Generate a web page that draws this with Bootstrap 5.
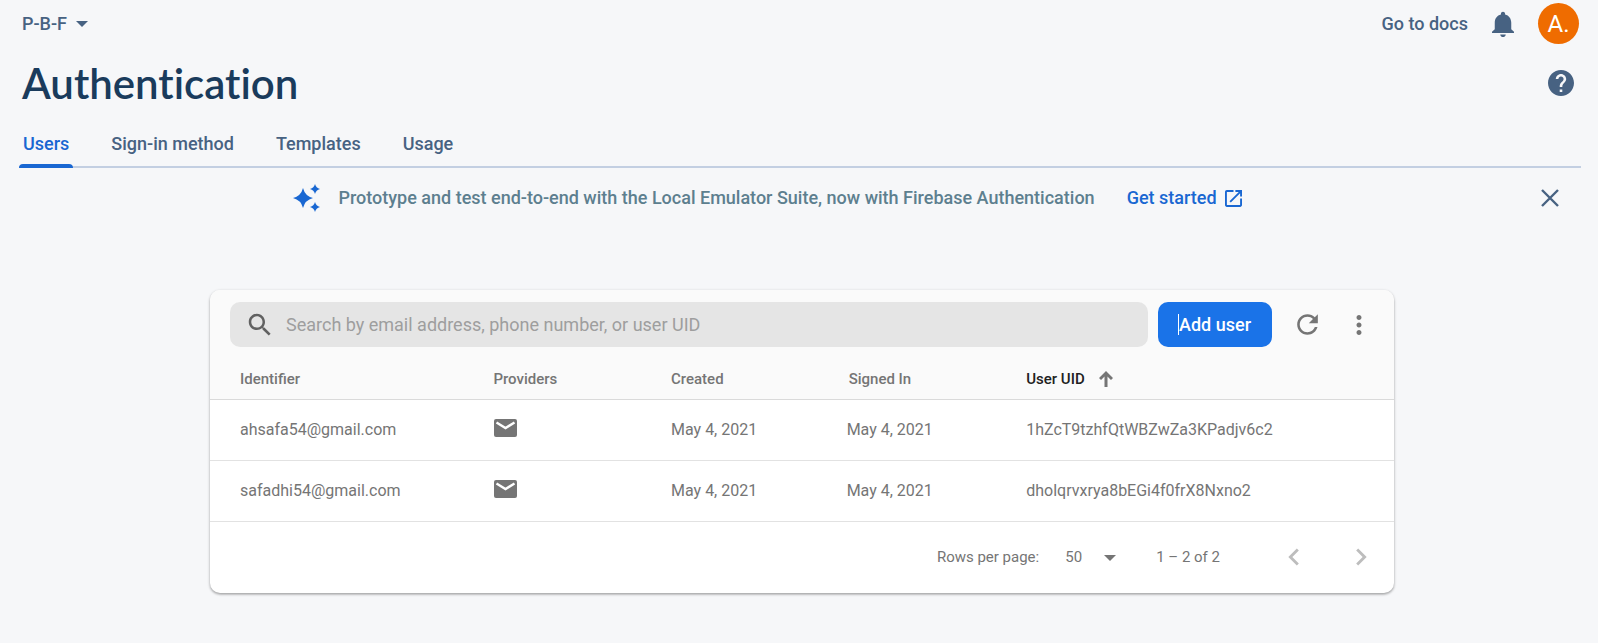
<!DOCTYPE html>
<html lang="en">
<head>
<meta charset="utf-8">
<meta name="viewport" content="width=device-width, initial-scale=1">
<title>Authentication</title>
<link href="https://cdn.jsdelivr.net/npm/bootstrap@5.3.0/dist/css/bootstrap.min.css" rel="stylesheet">
<style>
  body { background: #f6f7f9; color: #757575; font-family: Roboto, "Liberation Sans", sans-serif; font-size: 18px; line-height: 24px; }
  svg { display: block; fill: currentColor; flex: none; }
  .plain-btn { border: 0; background: none; padding: 0; color: inherit; display: inline-flex; align-items: center; justify-content: center; font-weight: 500; }
  .slate { color: #476282; }
  .docs-link { font-weight: 500; }
  .top-bar { height: 47px; padding: 0 19px 0 22px; }
  .avatar { width: 41px; height: 41px; background: #ef6c00; color: #fff; font-size: 24px; font-weight: 400; }
  .title-row { height: 75px; padding: 0 24px 4px 22px; }
  .page-title { font-family: Lato, sans-serif; font-weight: 600; font-size: 42px; line-height: 48px; font-variant-ligatures: none; color: #1a3b5c; }
  .tab-strip { margin: 0 17px 0 19px; border-bottom: 2px solid #c3cfe2; height: 46px; }
  .tab-strip .nav-link { padding: 10px 4px 0; margin: 0 34px 0 0; height: 46px; color: #476282; font-weight: 500; border-bottom: 0; }
  .tab-strip .nav-link.active { color: #1967d2; }
  .tab-strip .nav-link.active::after { content: ""; display: block; height: 4px; margin: 8px -4px 0; border-radius: 4px 4px 0 0; background: #1967d2; }
  .notice { height: 60px; padding: 0 36px 0 24px; color: #5d7f8f; font-weight: 500; }
  .notice-text { padding-right: 28px; }
  .notice-link { color: #1967d2; margin-left: 32px; }
  .users-wrap { padding: 62px 18px 48px 24px; }
  .users-card { max-width: 1184px; border: 0; border-radius: 10px; background: #fff; box-shadow: 0 1px 3px rgba(0,0,0,.3), 0 2px 2px rgba(0,0,0,.1); color: inherit; }
  .card-tools { padding: 12px 20px; background: #fafafa; border-radius: 10px 10px 0 0; }
  .search-box { height: 45px; border-radius: 10px; background: #e5e5e5; padding: 0 15px; gap: 11px; }
  .search-box input { border: 0; outline: 0; background: none; padding: 0; width: 100%; color: #616161; }
  .search-box input::placeholder { color: #9e9e9e; opacity: 1; }
  .add-user { height: 45px; border-radius: 10px; border: 0; background: #1a73e8; color: #fff; font-weight: 500; padding: 0 21px; margin-left: 10px; white-space: nowrap; }
  .text-caret { width: 1px; height: 21px; background: #fff; left: 20px; top: 12px; }
  .refresh { margin-left: 20px; }
  .more { margin-left: 21px; }
  .users-table { table-layout: fixed; --bs-table-bg: transparent; --bs-table-color: #757575; }
  .users-table th, .users-table td { padding: 0 0 0 20px; border-bottom: 1px solid #e2e2e2; vertical-align: middle; }
  .users-table th { height: 40px; background: #fafafa; font-size: 15px; line-height: 20px; font-weight: 500; color: #757575; border-color: #dadada; }
  .users-table td { height: 61px; font-size: 16px; color: #757575; }
  .users-table th:first-child, .users-table td:first-child { padding-left: 30px; }
  .users-table td:nth-child(4) { padding-left: 18px; }
  .users-table th.sorted { color: #212121; }
  .sort-arrow { margin-left: 14px; }
  .mail { margin: 0 0 4px 1px; }
  .col-id { width: 22.25%; } .col-std { width: 15%; }
  .pager { height: 71px; padding: 0 16px; font-size: 15px; }
  .page-size { margin-left: 26px; }
  .page-size select { appearance: none; border: 0; background: none; color: inherit; padding: 0; width: 51px; }
  .page-size svg { right: 0; top: 10px; pointer-events: none; }
  .range { margin-left: 40px; }
  .pager .plain-btn { color: #bdbdbd; }
  .prev { margin-left: 57px; }
  .next { margin-left: 33px; }
</style>
</head>
<body>
<header class="top-bar d-flex align-items-center justify-content-between slate">
  <button class="plain-btn" type="button">P-B-F
    <svg class="ms-2" width="15" height="6" viewBox="0 0 15 6"><path d="M1 0h12L7 6z"/></svg>
  </button>
  <div class="d-flex align-items-center">
    <a href="#" class="slate text-decoration-none docs-link">Go to docs</a>
    <button class="plain-btn ms-4" type="button" aria-label="Notifications">
      <svg width="22" height="26" viewBox="4 2 16 20" preserveAspectRatio="none"><path d="M12 22c1.100 0 2-.9 2-2h-4c0 1.100.9 2 2 2zm6-6v-5c0-3.070-1.630-5.640-4.500-6.320V4c0-.83-.67-1.500-1.500-1.500s-1.500.67-1.500 1.500v.68C7.640 5.360 6 7.920 6 11v5l-2 2v1h16v-1l-2-2z"/></svg>
    </button>
    <button class="plain-btn avatar rounded-circle ms-4" type="button">A.</button>
  </div>
</header>
<main>
  <div class="title-row d-flex align-items-center justify-content-between">
    <h1 class="page-title mb-0">Authentication</h1>
    <button class="plain-btn slate" type="button" aria-label="Help">
      <svg width="26" height="26" viewBox="2 2 20 20"><path d="M12 2C6.480 2 2 6.480 2 12s4.480 10 10 10 10-4.480 10-10S17.520 2 12 2zm1 17h-2v-2h2v2zm2.070-7.750l-.9.920C13.450 12.900 13 13.500 13 15h-2v-.5c0-1.100.45-2.100 1.170-2.830l1.240-1.260c.37-.36.59-.86.59-1.410 0-1.100-.9-2-2-2s-2 .9-2 2H8c0-2.210 1.790-4 4-4s4 1.790 4 4c0 .88-.36 1.680-.93 2.250z"/></svg>
    </button>
  </div>
  <nav class="nav tab-strip" aria-label="Authentication sections">
    <a class="nav-link active" href="#" aria-current="page">Users</a>
    <a class="nav-link" href="#">Sign-in method</a>
    <a class="nav-link" href="#">Templates</a>
    <a class="nav-link" href="#">Usage</a>
  </nav>
  <section class="notice d-flex align-items-center">
    <div class="notice-text flex-grow-1 d-flex align-items-center justify-content-center">
      <svg width="30" height="30" viewBox="0 0 30 30" class="me-3"><path fill="#1967d2" d="M11 5q2 8 10 10q-8 2-10 10q-2-8-10-10q8-2 10-10zM23 1q1 4 5 5q-4 1-5 5q-1-4-5-5q4-1 5-5zM23 19q1 4 5 5q-4 1-5 5q-1-4-5-5q4-1 5-5z"/></svg>
      <span>Prototype and test end-to-end with the Local Emulator Suite, now with Firebase Authentication</span>
      <a href="#" class="notice-link d-flex align-items-center text-decoration-none text-nowrap">Get started
        <svg class="ms-2" width="17" height="17" viewBox="3 3 18 18"><path d="M19 19H5V5h7V3H5c-1.110 0-2 .9-2 2v14c0 1.100.89 2 2 2h14c1.100 0 2-.9 2-2v-7h-2v7zM14 3v2h3.590l-9.830 9.830 1.410 1.410L19 6.410V10h2V3h-7z"/></svg>
      </a>
    </div>
    <button class="plain-btn slate" type="button" aria-label="Dismiss">
      <svg width="24" height="24" viewBox="0 0 24 24"><path d="M4 4l16 16M20 4L4 20" fill="none" stroke="currentColor" stroke-width="2.400"/></svg>
    </button>
  </section>
  <section class="users-wrap">
    <div class="card users-card mx-auto">
      <div class="card-tools d-flex align-items-center">
        <label class="search-box flex-grow-1 d-flex align-items-center">
          <svg width="30" height="30" viewBox="0 0 24 24"><path fill="#616161" d="M15.500 14h-.79l-.28-.27C15.410 12.590 16 11.110 16 9.500 16 5.910 13.090 3 9.500 3S3 5.910 3 9.500 5.910 16 9.500 16c1.610 0 3.090-.59 4.230-1.570l.27.28v.79l5 4.990L20.490 19l-4.990-5zm-6 0C7.010 14 5 11.990 5 9.500S7.010 5 9.500 5 14 7.010 14 9.500 11.990 14 9.500 14z"/></svg>
          <input type="search" aria-label="Search users" placeholder="Search by email address, phone number, or user UID">
        </label>
        <button class="add-user position-relative" type="button">Add user<span class="text-caret position-absolute"></span></button>
        <button class="plain-btn refresh" type="button" aria-label="Refresh">
          <svg width="31" height="31" viewBox="0 0 24 24"><path d="M17.650 6.350C16.200 4.900 14.210 4 12 4c-4.420 0-7.990 3.580-7.990 8s3.570 8 7.990 8c3.730 0 6.840-2.550 7.730-6h-2.080c-.82 2.330-3.040 4-5.650 4-3.310 0-6-2.690-6-6s2.690-6 6-6c1.660 0 3.140.69 4.220 1.780L13 11h7V4l-2.350 2.350z"/></svg>
        </button>
        <button class="plain-btn more" type="button" aria-label="More options">
          <svg width="30" height="30" viewBox="0 0 24 24"><path d="M12 8c1.100 0 2-.9 2-2s-.9-2-2-2-2 .9-2 2 .9 2 2 2zm0 2c-1.100 0-2 .9-2 2s.9 2 2 2 2-.9 2-2-.9-2-2-2zm0 6c-1.100 0-2 .9-2 2s.9 2 2 2 2-.9 2-2-.9-2-2-2z"/></svg>
        </button>
      </div>
      <table class="table users-table mb-0">
        <colgroup><col class="col-id"><col class="col-std"><col class="col-std"><col class="col-std"><col></colgroup>
        <thead>
          <tr><th scope="col">Identifier</th><th scope="col">Providers</th><th scope="col">Created</th><th scope="col">Signed In</th>
            <th scope="col" class="sorted" aria-sort="ascending"><div class="d-flex align-items-center">User UID
              <svg class="sort-arrow" width="14" height="16" viewBox="0 0 14 16"><path fill="#757575" d="M7 0l7 7-2 2-3.500-3.500V16h-3V5.500L2 9 0 7z"/></svg></div></th></tr>
        </thead>
        <tbody>
          <tr><td>ahsafa54@gmail.com</td>
            <td><svg class="mail" width="23" height="18" viewBox="0 0 23 18" role="img" aria-label="Email"><path d="M2 0h19q2 0 2 2v14q0 2-2 2H2q-2 0-2-2V2q0-2 2-2z"/><path d="M2.500 3.500l9 5.500 9-5.500" fill="none" stroke="#fff" stroke-width="2.400"/></svg></td>
            <td>May 4, 2021</td><td>May 4, 2021</td><td>1hZcT9tzhfQtWBZwZa3KPadjv6c2</td></tr>
          <tr><td>safadhi54@gmail.com</td>
            <td><svg class="mail" width="23" height="18" viewBox="0 0 23 18" role="img" aria-label="Email"><path d="M2 0h19q2 0 2 2v14q0 2-2 2H2q-2 0-2-2V2q0-2 2-2z"/><path d="M2.500 3.500l9 5.500 9-5.500" fill="none" stroke="#fff" stroke-width="2.400"/></svg></td>
            <td>May 4, 2021</td><td>May 4, 2021</td><td>dholqrvxrya8bEGi4f0frX8Nxno2</td></tr>
        </tbody>
      </table>
      <div class="pager d-flex align-items-center justify-content-end">
        <label for="page-size">Rows per page:</label>
        <div class="page-size position-relative">
          <select id="page-size"><option>50</option><option>100</option></select>
          <svg class="position-absolute" width="12" height="6" viewBox="0 0 12 6"><path d="M0 0h12L6 6z"/></svg>
        </div>
        <span class="range">1 – 2 of 2</span>
        <button class="plain-btn prev" type="button" aria-label="Previous page"><svg width="34" height="34" viewBox="0 0 24 24"><path d="M15.410 7.410L14 6l-6 6 6 6 1.410-1.410L10.830 12z"/></svg></button>
        <button class="plain-btn next" type="button" aria-label="Next page"><svg width="34" height="34" viewBox="0 0 24 24"><path d="M10 6L8.590 7.410 13.170 12l-4.580 4.590L10 18l6-6z"/></svg></button>
      </div>
    </div>
  </section>
</main>
<script src="https://cdn.jsdelivr.net/npm/bootstrap@5.3.0/dist/js/bootstrap.bundle.min.js"></script>
</body>
</html>
